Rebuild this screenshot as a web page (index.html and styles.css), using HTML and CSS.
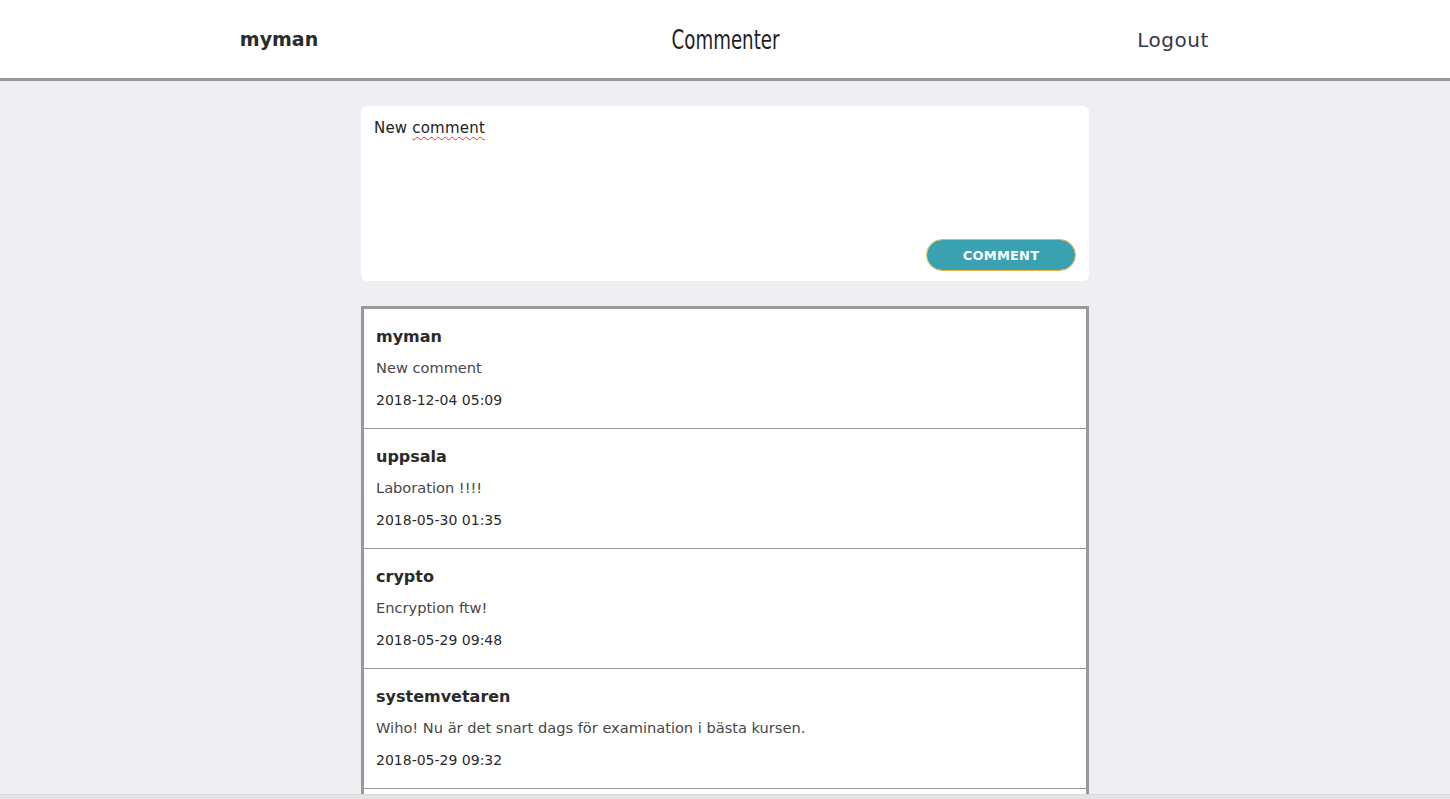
FILE: index.html
```html
<!DOCTYPE html>
<html>
<head>
<meta charset="utf-8">
<link rel="stylesheet" href="styles.css">
</head>
<body>
<header class="topbar">
  <div class="topbar-inner">
    <div class="user">myman</div>
    <div class="brand">Commenter</div>
    <div class="logout">Logout</div>
  </div>
</header>
<main class="main">
  <form class="composer">
    <div class="composer-text"><span>New </span><span class="spell">comment</span></div>
    <div class="composer-actions">
      <button type="button" class="btn">COMMENT</button>
    </div>
  </form>
  <section class="comments">
    <article class="comment">
      <div class="c-user">myman</div>
      <div class="c-body">New comment</div>
      <div class="c-date">2018-12-04 05:09</div>
    </article>
    <article class="comment">
      <div class="c-user">uppsala</div>
      <div class="c-body">Laboration !!!!</div>
      <div class="c-date">2018-05-30 01:35</div>
    </article>
    <article class="comment">
      <div class="c-user">crypto</div>
      <div class="c-body">Encryption ftw!</div>
      <div class="c-date">2018-05-29 09:48</div>
    </article>
    <article class="comment">
      <div class="c-user">systemvetaren</div>
      <div class="c-body">Wiho! Nu är det snart dags för examination i bästa kursen.</div>
      <div class="c-date">2018-05-29 09:32</div>
    </article>
  </section>
</main>
<div class="hscroll"></div>
</body>
</html>
```
FILE: styles.css
```css
html, body {
  margin: 0;
  padding: 0;
}
body {
  background: #efeef3;
  font-family: "DejaVu Sans", "Open Sans", sans-serif;
  color: #333;
  height: 799px;
  overflow: hidden;
}
.topbar {
  background: #fff;
  height: 78px;
  border-bottom: 3px solid #999;
}
.topbar-inner {
  width: 1341px;
  margin: 0 auto;
  height: 78px;
  display: grid;
  grid-template-columns: 1fr 1fr 1fr;
  align-items: center;
  text-align: center;
}
.user {
  font-weight: bold;
  font-size: 19px;
  color: #2b2b2b;
  padding-left: 2px;
}
.brand {
  font-family: "DejaVu Sans Condensed", "DejaVu Sans", sans-serif;
  font-stretch: condensed;
  font-size: 27px;
  color: #1e1e1e;
  transform: scaleX(0.75);
  padding-top: 1px;
}
.logout {
  font-size: 20px;
  color: #33374a;
  font-weight: normal;
  letter-spacing: 0.5px;
  padding-top: 1px;
  padding-left: 2px;
}
.main {
  width: 728px;
  margin: 25px auto 0;
  display: flex;
  flex-direction: column;
  gap: 25px;
}
.composer {
  background: #fff;
  border-radius: 6px;
  height: 175px;
  display: flex;
  flex-direction: column;
  justify-content: space-between;
  padding: 13px 13px 11px 13px;
  box-sizing: border-box;
  margin: 0;
}
.composer-text {
  font-size: 15px;
  color: #222;
  letter-spacing: 0.2px;
}
.spell {
  text-decoration: underline wavy #e33;
  text-decoration-thickness: 1px;
  text-underline-offset: 3px;
}
.composer-actions {
  display: flex;
  justify-content: flex-end;
}
.btn {
  width: 148px;
  height: 30px;
  border: none;
  border-radius: 15px;
  background: #3aa1b0;
  color: #fff;
  font-family: "DejaVu Sans", sans-serif;
  font-weight: bold;
  font-size: 13px;
  outline: 1px solid #e9b04b;
  outline-offset: 0;
  letter-spacing: 0.2px;
  margin-right: 1px;
}
.comments {
  border: 3px solid #999;
  border-bottom: none;
  background: #fff;
  padding-bottom: 40px;
}
.comment {
  padding: 18px 12px 18px 12px;
  border-bottom: 1px solid #999;
  display: flex;
  flex-direction: column;
  gap: 11px;
}
.c-user {
  font-weight: bold;
  font-size: 16px;
  line-height: 20px;
  color: #2a2a2a;
}
.c-body {
  font-size: 14.6px;
  line-height: 20px;
  color: #474747;
}
.c-date {
  font-size: 14px;
  line-height: 20px;
  color: #2a2a2a;
  margin-top: 1px;
}
.hscroll {
  position: fixed;
  left: 0;
  right: 0;
  bottom: 0;
  height: 4px;
  background: #e4e4e4;
  border-top: 1px solid #d8d8d8;
}
```
